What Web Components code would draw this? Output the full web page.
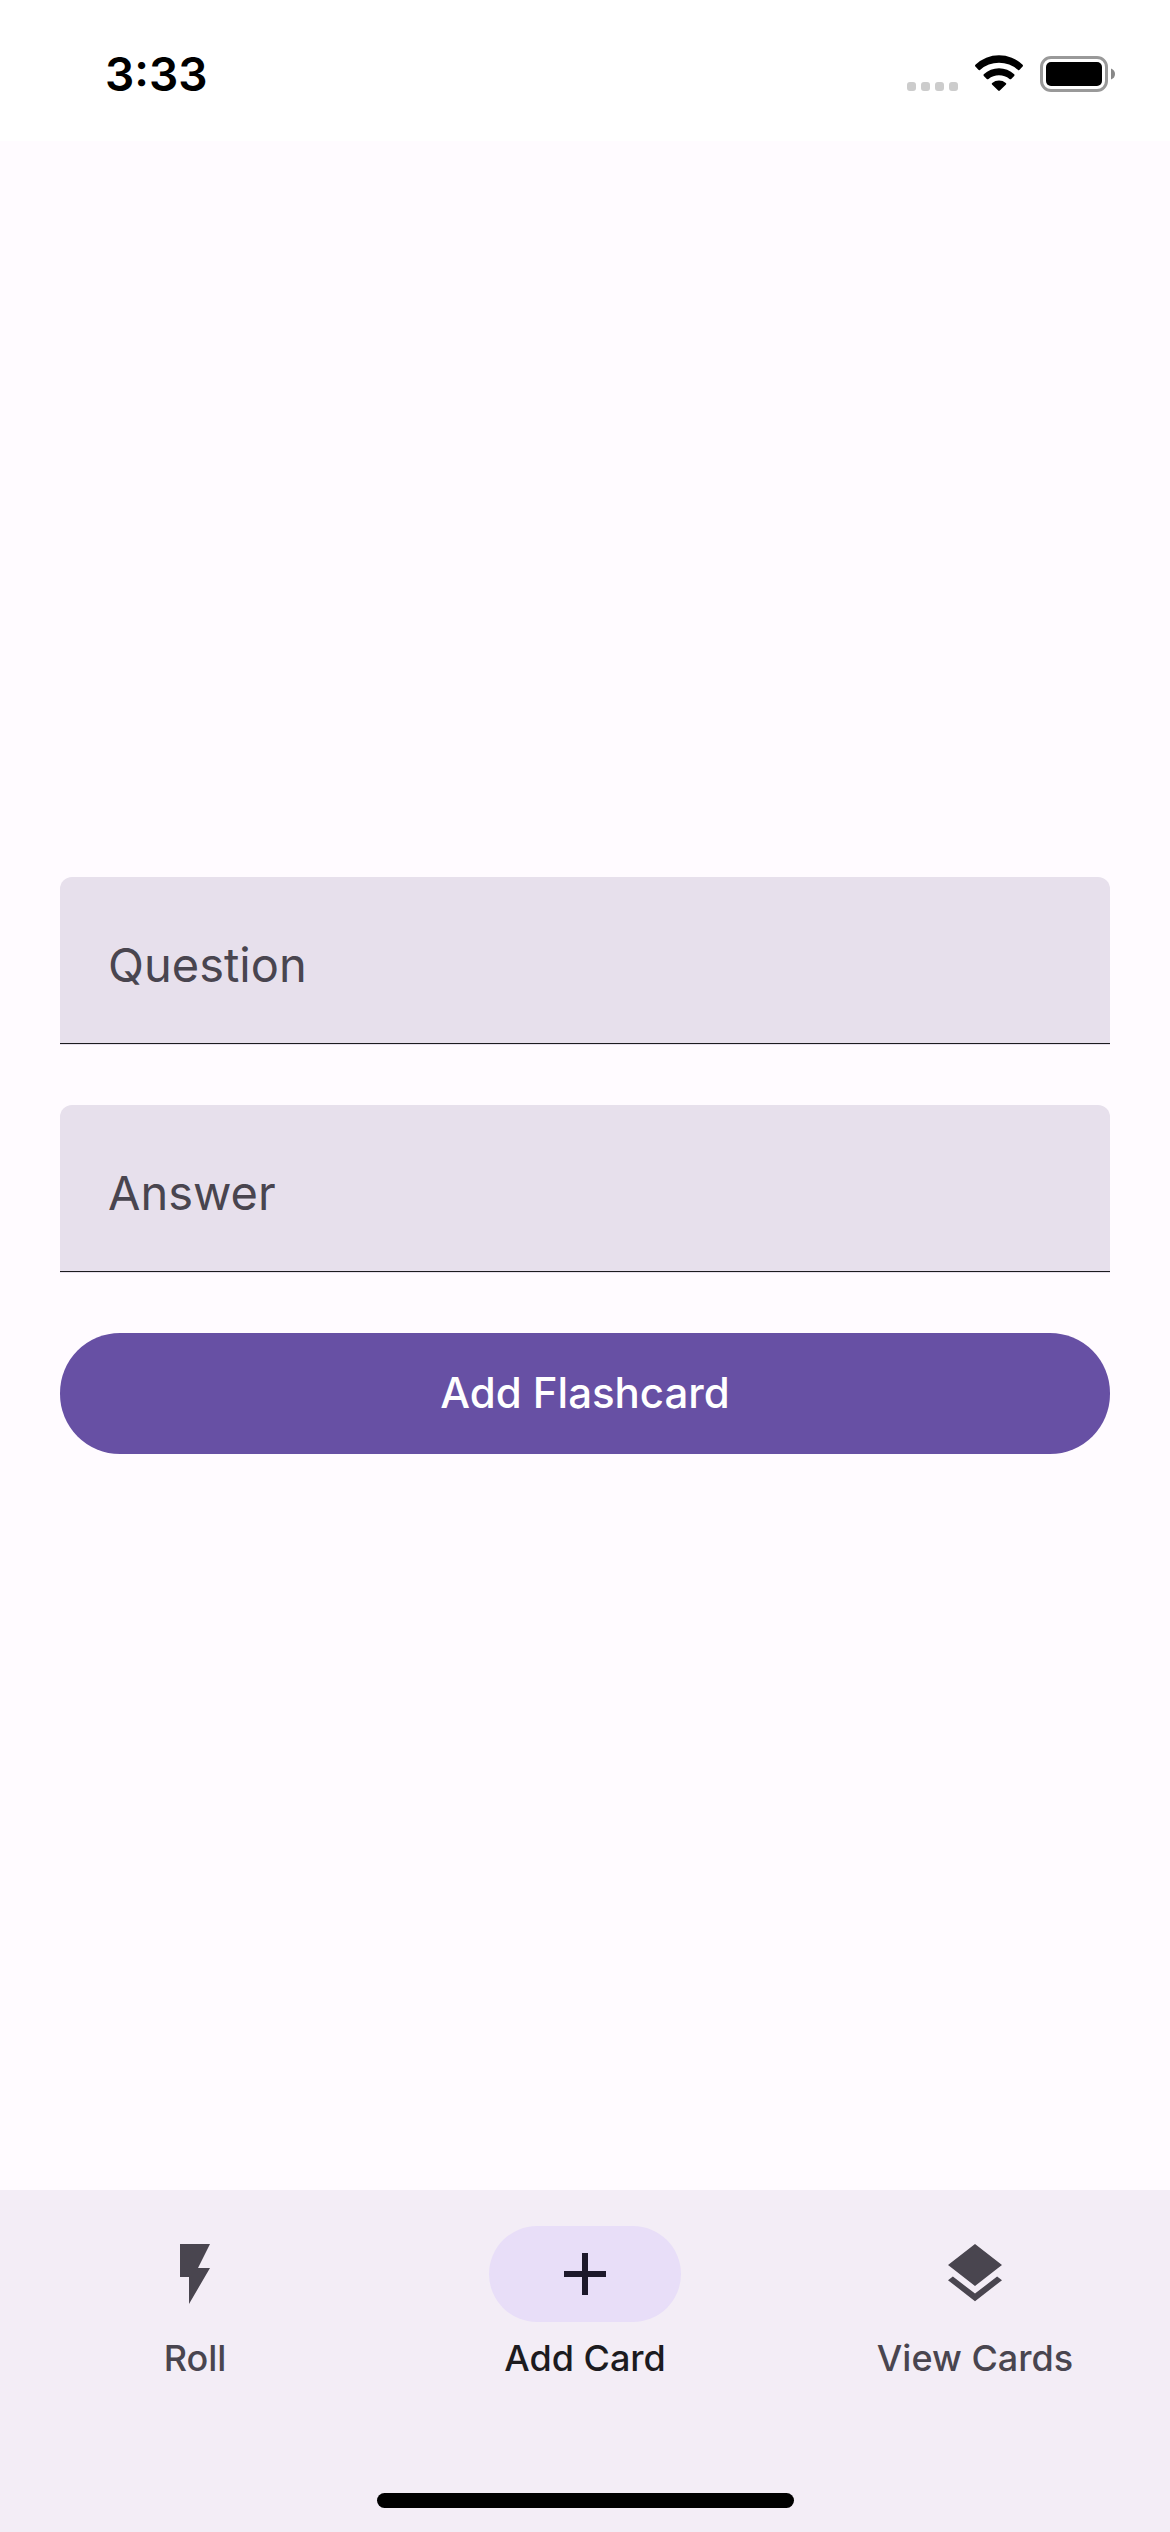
<!DOCTYPE html>
<html lang="en">
<head>
<meta charset="utf-8">
<meta name="viewport" content="width=device-width">
<title>Flashcards</title>
<style>
  html, body { margin: 0; }
  body {
    font-family: Inter, Roboto, sans-serif;
    background: #fffbff;
    --primary: #6750a4;
    --on-surface: #1c1b1f;
    --on-surface-variant: #49454f;
    --surface-variant: #e7e0ec;
    --nav-surface: #f3edf6;
    --secondary-container: #e8def8;
    --on-secondary-container: #1d192b;
  }
</style>
</head>
<body>
<flash-app></flash-app>

<script>
const define = (name, html, setup) => {
  const template = document.createElement('template');
  template.innerHTML = html;
  customElements.define(name, class extends HTMLElement {
    constructor() {
      super();
      this.attachShadow({ mode: 'open' }).append(template.content.cloneNode(true));
    }
    connectedCallback() { if (setup) setup(this, this.shadowRoot); }
  });
};

define('status-bar', `
  <style>
    :host { display: flex; justify-content: space-between; align-items: center;
      padding: 54px 55px 47px 105px; background: #fff; color: #000; }
    time { font-size: 46px; line-height: 40px; font-weight: 600; }
    .icons { display: flex; gap: 16px; }
    svg { display: block; height: 38px; }
  </style>
  <time>3:33</time>
  <div class="icons">
    <svg width="52" viewBox="0 0 52 38" fill="#ccc" aria-hidden="true">
      <rect x="0" y="27" width="9" height="9" rx="3"/><rect x="14" y="27" width="9" height="9" rx="3"/>
      <rect x="28" y="27" width="9" height="9" rx="3"/><rect x="42" y="27" width="9" height="9" rx="3"/>
    </svg>
    <svg width="49" viewBox="0 0 49 38" aria-hidden="true">
      <path d="M.4 9.8A34 34 0 0 1 47.6 9.8Q48.4 10.7 47.6 11.5L44.6 14.8Q43.8 15.6 43 14.9A28.5 28.5 0 0 0 5 14.9Q4.2 15.6 3.4 14.8L.4 11.5Q-.4 10.7 .4 9.8Z"/>
      <path d="M8.8 19.3A22.3 22.3 0 0 1 39.2 19.3Q40 20.1 39.2 20.9L36.2 23.9Q35.4 24.7 34.5 24A16.5 16.5 0 0 0 13.5 24Q12.6 24.7 11.8 23.9L8.8 20.9Q8 20.1 8.8 19.3Z"/>
      <path d="M17.2 28A10.8 10.8 0 0 1 30.8 28Q31.8 28.8 31 29.6L24.8 35.6Q24 36.3 23.2 35.6L17 29.6Q16.2 28.8 17.2 28Z"/>
    </svg>
    <svg width="75" viewBox="0 0 75 38" aria-hidden="true">
      <rect x="1.5" y="2.5" width="65" height="33" rx="9.5" fill="none" stroke="#999" stroke-width="3"/>
      <rect x="6" y="7" width="56" height="24" rx="5"/>
      <path d="M71 13.5Q75 15 75 19T71 24.5Z" fill="#888"/>
    </svg>
  </div>`);

define('text-field', `
  <style>
    :host { display: block; }
    .box { display: grid; background: var(--surface-variant); border-radius: 12px 12px 0 0;
      border-bottom: 1px solid var(--surface-variant); overflow: hidden; }
    input, label { grid-area: 1 / 1; padding: 64px 48px 54px; font-size: 47px; line-height: 48px; }
    input { box-sizing: border-box; width: 100%; height: 167px; margin: 0; border: 0; border-bottom: 1px solid var(--on-surface);
      border-radius: 0; background: none; color: var(--on-surface); font-family: inherit; outline: 0; }
    label { color: var(--on-surface-variant); pointer-events: none; }
    input:not(:placeholder-shown) + label { visibility: hidden; }
  </style>
  <div class="box">
    <input id="field" type="text" placeholder=" ">
    <label for="field"><slot></slot></label>
  </div>`);

define('filled-button', `
  <style>
    :host { display: block; }
    button { display: block; width: 100%; margin: 0; border: 0; border-radius: 60px; padding: 30px 72px 31px;
      background: var(--primary); color: #fff; font: 500 42px/60px Inter, Roboto, sans-serif; cursor: pointer; }
  </style>
  <button type="button"><slot></slot></button>`);

define('nav-item', `
  <style>
    :host { display: block; flex: 1 1 0; }
    a { display: flex; flex-direction: column; align-items: center; gap: 12px;
      color: var(--on-surface-variant); text-decoration: none; font-size: 36px; line-height: 48px; font-weight: 500; }
    .pill { display: flex; align-items: center; justify-content: center; width: 192px; height: 96px; border-radius: 48px; }
    svg { display: block; width: 72px; height: 72px; fill: currentColor; }
    :host([active]) a { color: var(--on-surface); }
    :host([active]) .pill { background: var(--secondary-container); color: var(--on-secondary-container); }
  </style>
  <a href="#"><span class="pill"><svg viewBox="0 0 24 24" aria-hidden="true"><path/></svg></span><span><slot></slot></span></a>`,
  (host, root) => {
    const icons = {
      flash: 'M7 2v11h3v9l7-12h-4l4-8z',
      plus: 'M19 13h-6v6h-2v-6H5v-2h6V5h2v6h6z',
      layers: 'M12 16l7.36-5.73L21 9l-9-7-9 7 1.63 1.27M12 18.54l-7.38-5.73L3 14.07l9 7 9-7-1.63-1.27z'
    };
    root.querySelector('path').setAttribute('d', icons[host.getAttribute('icon')]);
    root.querySelector('a').href = '#' + host.getAttribute('icon');
    if (host.hasAttribute('active')) root.querySelector('a').setAttribute('aria-current', 'page');
  });

define('bottom-nav', `
  <style>
    :host { display: block; background: var(--nav-surface); }
    nav { display: flex; padding: 36px 0 111px; }
    .home { width: 417px; height: 15px; margin: 0 auto; border-radius: 8px; background: #000; }
    .safe { padding-bottom: 24px; }
  </style>
  <nav><slot></slot></nav>
  <div class="safe"><div class="home"></div></div>`);

define('flash-app', `
  <style>
    :host { display: flex; flex-direction: column; min-height: 100vh; }
    main { flex: 1; display: flex; flex-direction: column; justify-content: center; gap: 60px; padding: 0 60px; }
  </style>
  <status-bar></status-bar>
  <main>
    <text-field>Question</text-field>
    <text-field>Answer</text-field>
    <filled-button>Add Flashcard</filled-button>
  </main>
  <bottom-nav>
    <nav-item icon="flash">Roll</nav-item>
    <nav-item icon="plus" active>Add Card</nav-item>
    <nav-item icon="layers">View Cards</nav-item>
  </bottom-nav>`);
</script>
</body>
</html>
